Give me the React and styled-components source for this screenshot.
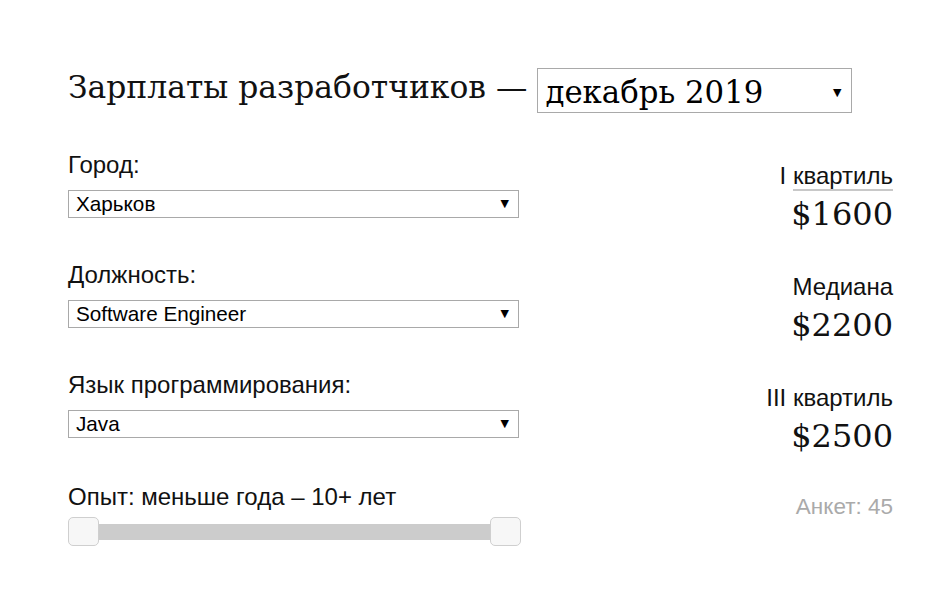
import React from 'react';
import styled, { createGlobalStyle } from 'styled-components';

const GlobalStyle = createGlobalStyle`
    html, body {
        margin: 0;
        padding: 0;
        background: #fff;
    }
    body {
        font-family: "Liberation Sans", Arial, sans-serif;
        color: #111;
    }
`;

const SERIF = `"DejaVu Serif", "Liberation Serif", serif`;
const SANS = `"Liberation Sans", Arial, sans-serif`;

const Page = styled.div`
    width: 825px;
    padding: 68px 0 0 68px;
`;

const Header = styled.div`
    display: flex;
    align-items: flex-start;
    gap: 10px;
    margin-bottom: 38px;
`;

const Title = styled.h1`
    margin: 0;
    font-family: ${SERIF};
    font-weight: normal;
    font-size: 31.4px;
    line-height: 38px;
    color: #111;
`;

const Body = styled.div`
    display: flex;
    justify-content: space-between;
`;

const Filters = styled.div`
    width: 453px;
    display: flex;
    flex-direction: column;
`;

const Field = styled.div`
    display: flex;
    flex-direction: column;
    margin-bottom: 43px;
    &:last-child {
        margin-bottom: 0;
        margin-top: 2px;
    }
`;

const Label = styled.div`
    font-size: 24px;
    line-height: 28px;
    margin-bottom: ${p => p.$tight ? 6 : 11}px;
`;

const Select = styled.div`
    display: flex;
    align-items: ${p => p.$big ? 'flex-start' : 'center'};
    justify-content: space-between;
    box-sizing: border-box;
    width: ${p => p.$width || 451}px;
    height: ${p => p.$height || 28}px;
    padding: ${p => p.$big ? '4px 10px 0 7px' : '0 9px 0 7px'};
    border: 1px solid #a9a9a9;
    background: #fff;
    font-family: ${p => p.$big ? SERIF : SANS};
    font-size: ${p => p.$big ? 30.8 : 20.7}px;
    line-height: ${p => p.$big ? 38 : 24}px;
    color: #000;
`;

const Arrow = styled.span`
    align-self: center;
    font-family: "DejaVu Sans", sans-serif;
    font-size: 11px;
    line-height: 12px;
    color: #000;
`;

const Slider = styled.div`
    display: flex;
    align-items: center;
    width: 453px;
    height: 29px;
    position: relative;
`;

const Track = styled.div`
    flex: 1;
    height: 16px;
    background: #cccccc;
`;

const Handle = styled.div`
    position: absolute;
    top: 0;
    ${p => p.$side}: 0;
    box-sizing: border-box;
    width: 31px;
    height: 29px;
    border: 1px solid #cfcfcf;
    border-radius: 5px;
    background: #f7f7f7;
`;

const Stats = styled.div`
    display: flex;
    flex-direction: column;
    align-items: flex-end;
    text-align: right;
    padding-top: 11px;
`;

const Stat = styled.div`
    display: flex;
    flex-direction: column;
    align-items: flex-end;
    margin-bottom: ${p => p.$gap}px;
`;

const StatLabel = styled.div`
    font-size: 24px;
    line-height: 28px;
    margin-bottom: 4px;
`;

const Term = styled.span`
    border-bottom: 2px solid #c8c8c8;
`;

const StatValue = styled.div`
    font-family: ${SERIF};
    font-size: 32px;
    line-height: 40px;
    color: #111;
`;

const Count = styled.div`
    font-size: 22.5px;
    line-height: 28px;
    color: #aaa;
`;

const fields = [
    { label: 'Город:', value: 'Харьков' },
    { label: 'Должность:', value: 'Software Engineer' },
    { label: 'Язык программирования:', value: 'Java' },
];

const stats = [
    { pre: 'I ', term: 'квартиль', value: '$1600', gap: 39 },
    { text: 'Медиана', value: '$2200', gap: 39 },
    { text: 'III квартиль', value: '$2500', gap: 37 },
];

export default function App() {
    return <>
        <GlobalStyle />
        <Page>
            <Header>
                <Title>Зарплаты разработчиков —</Title>
                <Select $big $width={315} $height={45}>
                    <span>декабрь 2019</span>
                    <Arrow>▼</Arrow>
                </Select>
            </Header>
            <Body>
                <Filters>
                    {fields.map(f =>
                        <Field key={f.label}>
                            <Label>{f.label}</Label>
                            <Select>
                                <span>{f.value}</span>
                                <Arrow>▼</Arrow>
                            </Select>
                        </Field>
                    )}
                    <Field>
                        <Label $tight>Опыт: меньше года – 10+ лет</Label>
                        <Slider>
                            <Track />
                            <Handle $side="left" />
                            <Handle $side="right" />
                        </Slider>
                    </Field>
                </Filters>
                <Stats>
                    {stats.map(s =>
                        <Stat key={s.value} $gap={s.gap}>
                            <StatLabel>
                                {s.term ? <>{s.pre}<Term>{s.term}</Term></> : s.text}
                            </StatLabel>
                            <StatValue>{s.value}</StatValue>
                        </Stat>
                    )}
                    <Count>Анкет: 45</Count>
                </Stats>
            </Body>
        </Page>
    </>;
}
